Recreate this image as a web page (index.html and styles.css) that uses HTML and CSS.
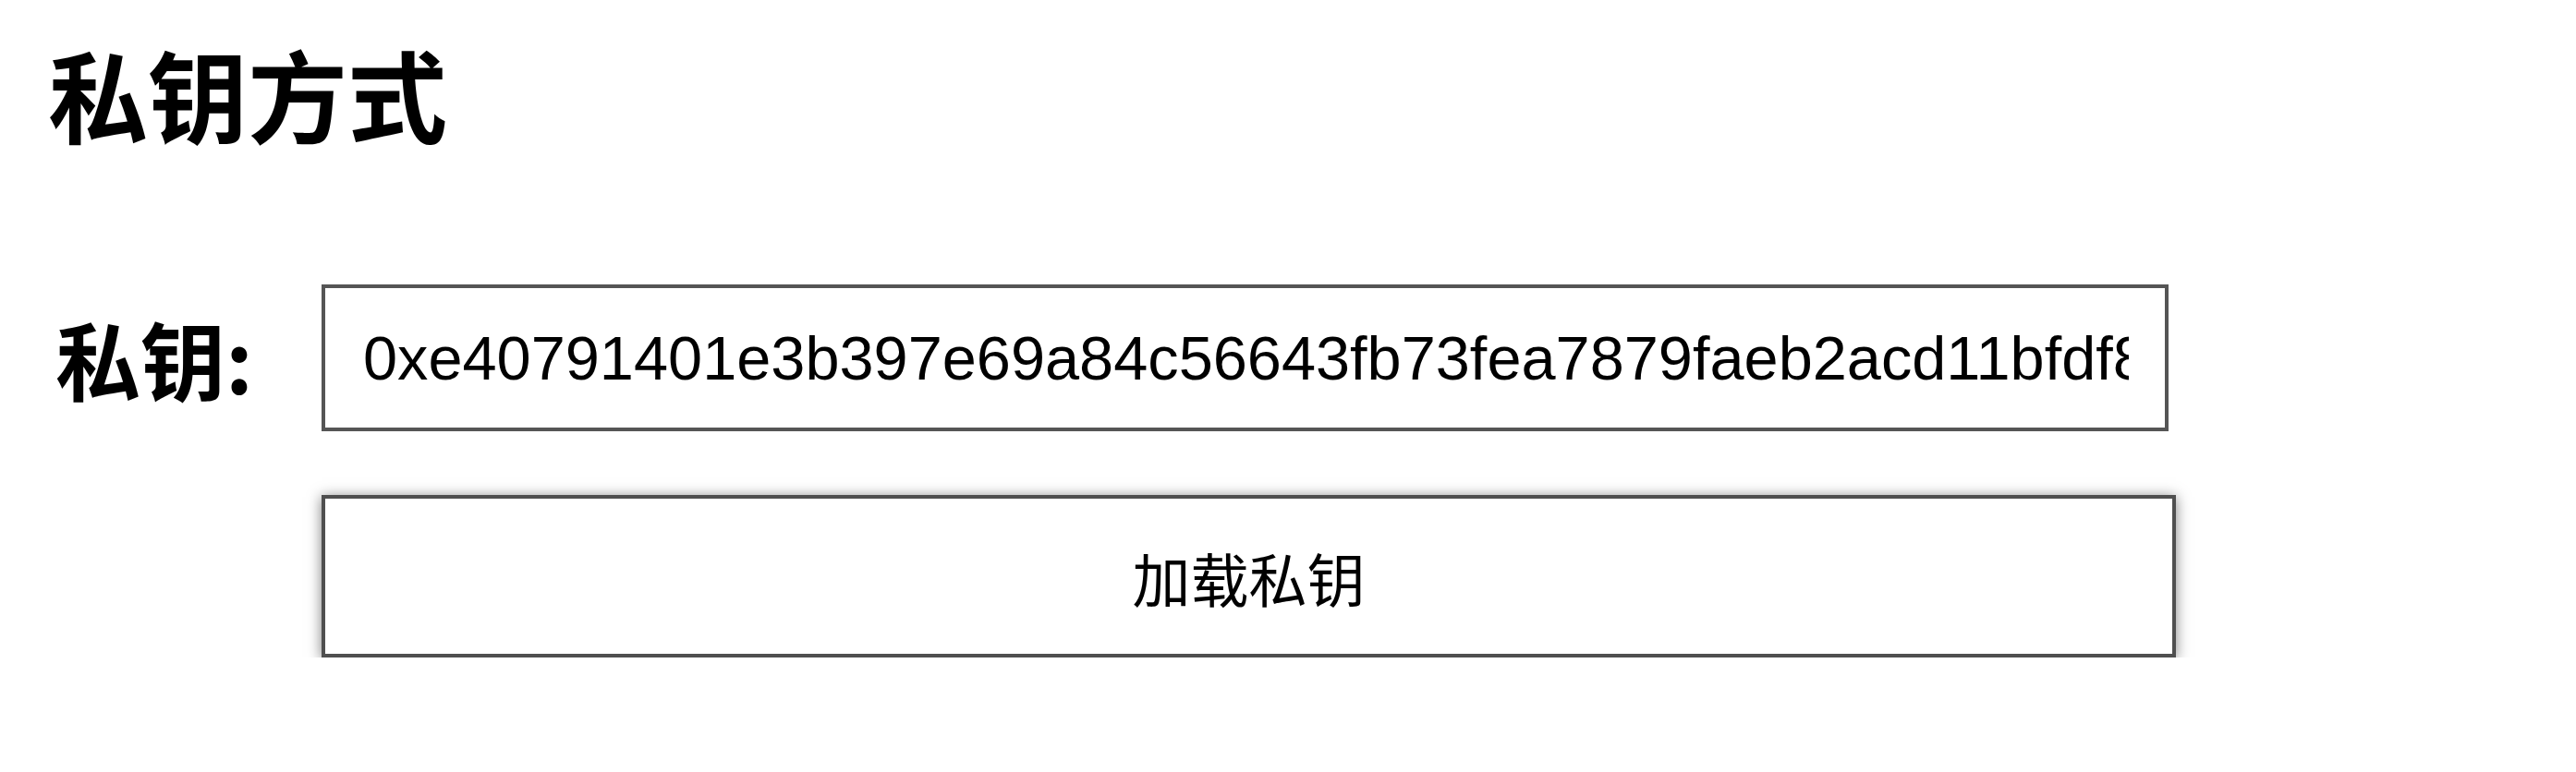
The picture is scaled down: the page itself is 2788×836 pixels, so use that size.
FILE: index.html
```html
<!DOCTYPE html>
<html lang="zh-CN">
<head>
<meta charset="utf-8">
<title>私钥方式</title>
<link rel="stylesheet" href="styles.css">
</head>
<body>
<main class="page">
  <h1 class="title">私钥方式</h1>
  <div class="field-row">
    <label class="field-label" for="pk">私钥:</label>
    <input class="field-input" id="pk" type="text" value="0xe40791401e3b397e69a84c56643fb73fea7879faeb2acd11bfdf8a3c1a7e62f9" readonly>
  </div>
  <div class="action-row">
    <button class="load-btn" type="button">加载私钥</button>
  </div>
</main>
</body>
</html>
```
FILE: styles.css
```css
html, body {
  margin: 0;
  padding: 0;
  background: #ffffff;
}
.page {
  padding: 35px 0 0 52px;
  font-family: "Noto Sans CJK SC", "Liberation Sans", sans-serif;
  color: #000;
}
.title {
  margin: 0 0 143px 0;
  font-size: 108px;
  line-height: 130px;
  font-weight: 700;
}
.field-row {
  display: flex;
  align-items: center;
}
.field-label {
  width: 296px;
  padding-left: 8px;
  box-sizing: border-box;
  font-size: 92px;
  font-weight: 700;
  line-height: 1.2;
}
.field-input {
  box-sizing: border-box;
  width: 1999px;
  height: 159px;
  margin: 0;
  border: 4px solid #555555;
  border-radius: 0;
  padding: 0 39px 0 41px;
  font-family: "Liberation Sans", Arial, sans-serif;
  font-size: 66.7px;
  color: #000;
  background: #fff;
  outline: none;
}
.action-row {
  margin-top: 69px;
  padding-left: 296px;
}
.load-btn {
  box-sizing: border-box;
  width: 2007px;
  height: 176px;
  margin: 0;
  border: 4px solid #4f4f4f;
  border-radius: 0;
  background: #fff;
  color: #000;
  font-family: "Noto Sans CJK SC", sans-serif;
  font-size: 63px;
  font-weight: 400;
  box-shadow: 0 2px 14px rgba(0, 0, 0, 0.5);
  cursor: pointer;
}
```
